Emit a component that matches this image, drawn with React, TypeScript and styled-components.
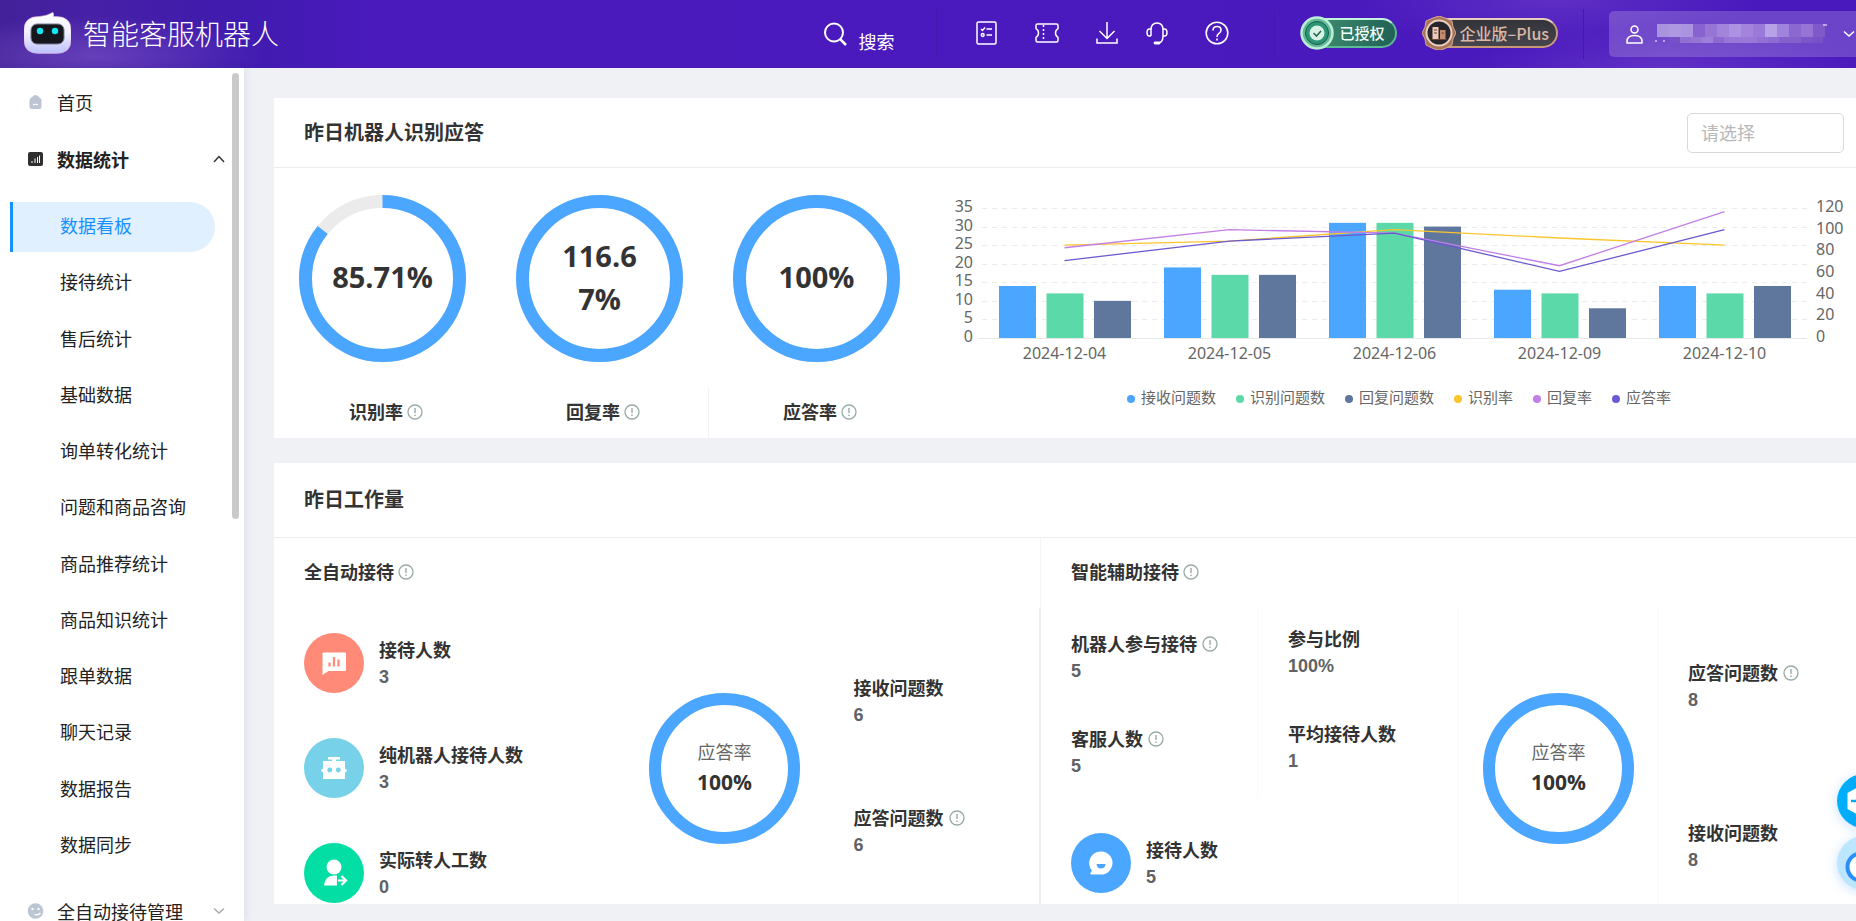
import React from "react";
import styled, { createGlobalStyle } from "styled-components";

const cjk = `"Noto Sans CJK SC", sans-serif`;

const GlobalStyle = createGlobalStyle`
  * { box-sizing: border-box; }
  body { margin: 0; background: #f0f1f5; font-family: ${cjk}; font-size: 18px; line-height: 27px; color: #333; }
  ul { list-style: none; margin: 0; padding: 0; }
  h2, h3, p { margin: 0; font-size: inherit; }
  a { color: inherit; text-decoration: none; }
  button { border: 0; padding: 0; background: none; color: inherit; font: inherit; cursor: pointer; }
  svg { display: block; flex: none; }
`;

const Page = styled.div`
  height: 100vh;
  display: flex;
  flex-direction: column;
  overflow: hidden;
  position: relative;
`;

/* ---------- header ---------- */

const TopBar = styled.header`
  flex: none;
  height: 68px;
  display: flex;
  align-items: center;
  padding-left: 24px;
  color: #fff;
  overflow: hidden;
  background:
    radial-gradient(ellipse 170px 40px at 95px 56px, rgba(150, 110, 215, 0.4), transparent),
    radial-gradient(ellipse 200px 40px at calc(100% - 190px) 68px, rgba(140, 95, 215, 0.35), transparent),
    radial-gradient(ellipse 200px 50px at calc(100% - 300px) 0, rgba(140, 95, 215, 0.3), transparent),
    linear-gradient(90deg, #43219a 0, #4620a6 90px, #401bae 230px, #4a1abd 380px, #4a19bd 100%);
`;

const Brand = styled.a`
  display: flex;
  align-items: center;
  gap: 12px;
  flex: 1 1 auto;
  padding-bottom: 3px;
  font-size: 28px;
  font-weight: 200;
  line-height: 40px;
  white-space: nowrap;
`;

const SearchButton = styled.button`
  display: flex;
  align-items: center;
  gap: 12px;
  height: 50px;
  padding-right: 41px;
  border-right: 1px solid #4518b2;
  span { padding-top: 14px; }
`;

const Tools = styled.nav`
  display: flex;
  align-items: center;
  height: 50px;
  padding: 0 32px 2px 36px;
  border-right: 1px solid #4518b2;
`;

const Tool = styled.button<{ $w: number }>`
  width: ${(p) => p.$w}px;
  display: flex;
  justify-content: center;
`;

const Badges = styled.div`
  display: flex;
  align-items: center;
  gap: 25px;
  height: 50px;
  padding: 0 25px 2px;
  border-right: 1px solid #4518b2;
`;

const Badge = styled.div<{ $gold?: boolean }>`
  position: relative;
  display: flex;
  align-items: center;
  height: 30px;
  margin-left: 6px;
  padding: 0 ${(p) => (p.$gold ? 7 : 10)}px 0 ${(p) => (p.$gold ? 30 : 32)}px;
  border-radius: 15px;
  border: 2px solid ${(p) => (p.$gold ? "#c89778" : "#5cb897")};
  border-top-color: ${(p) => (p.$gold ? "#e9cdbd" : "#c3f3dd")};
  background: ${(p) => (p.$gold ? "linear-gradient(#33333a, #46454d)" : "linear-gradient(100deg, #439272, #1f6055)")};
  color: ${(p) => (p.$gold ? "#d9b8a6" : "#f4fffa")};
  font-size: ${(p) => (p.$gold ? 16 : 15)}px;
  font-weight: 500;
  line-height: 24px;
  white-space: nowrap;
  svg { position: absolute; left: -8px; top: -4px; }
`;

const Account = styled.button`
  display: flex;
  align-items: center;
  margin-left: 25px;
  height: 46px;
  padding: 0 1px 0 17px;
  border-radius: 5px 0 0 5px;
  background: rgba(255, 255, 255, 0.19);
`;

const MaskedNameSlot = styled.span`
  margin: 0 12px;
`;

/* ---------- sidebar ---------- */

const Body = styled.div`
  flex: 1;
  min-height: 0;
  display: flex;
`;

const Sidebar = styled.aside`
  position: relative;
  flex: none;
  width: 244px;
  background: #fff;
  box-shadow: 2px 0 8px rgba(40, 50, 80, 0.08);
  padding-top: 10px;
  overflow: hidden;
  color: #222;
`;

const ScrollThumb = styled.div`
  position: absolute;
  right: 5px;
  top: 5px;
  width: 7px;
  height: 446px;
  border-radius: 4px;
  background: #cacaca;
`;

const MenuRow = styled.a<{ $open?: boolean }>`
  display: flex;
  align-items: center;
  height: 50px;
  margin-bottom: 7px;
  padding: 0 19px 2px 27px;
  line-height: 18px;
  font-weight: ${(p) => (p.$open ? 700 : 400)};
  white-space: nowrap;
  span { flex: 1; margin-left: 13px; }
`;

const SubMenu = styled.ul`
  height: 669px;
  margin: 17px 0 16px;
  display: flex;
  flex-direction: column;
  justify-content: space-between;
`;

const SubItem = styled.a<{ $active?: boolean }>`
  display: flex;
  align-items: center;
  height: 50px;
  margin: 0 29px 0 10px;
  padding: 0 0 3px 47px;
  white-space: nowrap;
  border-left: 3px solid ${(p) => (p.$active ? "#1890ff" : "transparent")};
  border-radius: 0 25px 25px 0;
  background: ${(p) => (p.$active ? "#e1f0fe" : "none")};
  color: ${(p) => (p.$active ? "#1890ff" : "inherit")};
`;

/* ---------- content ---------- */

const Main = styled.main`
  flex: 1;
  min-width: 0;
  padding: 30px 0 0 30px;
  overflow: hidden;
`;

const Card = styled.section`
  background: #fff;
  margin-bottom: 25px;
`;

const CardHead = styled.div<{ $tall?: boolean }>`
  display: flex;
  align-items: center;
  justify-content: space-between;
  height: ${(p) => (p.$tall ? 75 : 70)}px;
  padding: 0 12px 0 30px;
  border-bottom: 1px solid #ebedef;
  h2 { font-size: 20px; font-weight: 700; padding-bottom: 3px; }
`;

const Picker = styled.select`
  appearance: none;
  width: 157px;
  height: 40px;
  padding: 0 13px 2px;
  border: 1px solid #d9d9d9;
  border-radius: 5px;
  background: #fff;
  color: #b8b8b8;
  font: 18px ${cjk};
`;

const RateRow = styled.div`
  display: flex;
  height: 270px;
`;

const Rate = styled.div<{ $divided?: boolean }>`
  flex: none;
  width: 217px;
  display: flex;
  flex-direction: column;
  justify-content: space-between;
  align-items: center;
  padding-top: 27px;
  > p {
    align-self: stretch;
    display: flex;
    justify-content: center;
    height: 50px;
    padding: 10px 0 0 6px;
    border-left: 1px solid ${(p) => (p.$divided ? "#f0f2f4" : "transparent")};
  }
`;

const Label = styled.span<{ $gap?: number }>`
  display: inline-flex;
  align-items: center;
  gap: ${(p) => p.$gap ?? 4}px;
  height: 27px;
  font-weight: 700;
  white-space: nowrap;
`;

const RingBox = styled.div<{ $size: number }>`
  position: relative;
  width: ${(p) => p.$size}px;
  height: ${(p) => p.$size}px;
  flex: none;
`;

const RingText = styled.div<{ $big?: boolean }>`
  position: absolute;
  inset: 0;
  display: flex;
  flex-direction: column;
  align-items: center;
  justify-content: center;
  padding-bottom: 4px;
  text-align: center;
  color: #666;
  gap: 4px;
  strong {
    width: ${(p) => (p.$big ? "102px" : "auto")};
    color: #333;
    font: 700 ${(p) => (p.$big ? "29px/43px" : "21px/27px")} "Open Sans", sans-serif;
    word-break: break-all;
  }
`;

const ChartPane = styled.div`
  flex: 1;
  min-width: 0;
  svg.plot { width: 100%; height: auto; }
`;

const AxisText = styled.text`
  font: 16px "Noto Sans", sans-serif;
  fill: #666;
`;

const Legend = styled.ul`
  display: flex;
  justify-content: center;
  gap: 20px;
  padding: 6px 0 0 17px;
  font-size: 15px;
  line-height: 22px;
  color: #666;
  white-space: nowrap;
`;

const LegendItem = styled.li<{ $color: string }>`
  display: flex;
  align-items: center;
  gap: 6px;
  &::before {
    content: "";
    width: 8px;
    height: 8px;
    margin-top: 3px;
    border-radius: 50%;
    background: ${(p) => p.$color};
  }
`;

const Workload = styled.div`
  display: grid;
  grid-template-columns: 767fr 815fr;
`;

const SubHead = styled.h3<{ $divided?: boolean }>`
  display: flex;
  align-items: center;
  height: 70px;
  padding: 0 0 3px 30px;
  border-right: 1px solid ${(p) => (p.$divided ? "#f3f5f6" : "transparent")};
`;

const AutoBody = styled.div`
  display: grid;
  grid-template-columns: 346fr 205fr 187fr;
  height: 296px;
  padding-left: 29px;
  border-right: 2px solid #eceef0;
`;

const AssistBody = styled.div`
  display: grid;
  grid-template-columns: 417fr 200fr 198fr;
  height: 296px;
`;

const Stack = styled.div<{ $top: number; $gap: number; $left?: number; $divided?: boolean }>`
  display: flex;
  flex-direction: column;
  gap: ${(p) => p.$gap}px;
  padding: ${(p) => p.$top}px 0 0 ${(p) => p.$left ?? 0}px;
  border-left: 1px solid ${(p) => (p.$divided ? "#f8f9fa" : "transparent")};
`;

const AssistCounts = styled.div`
  display: grid;
  grid-template-columns: 216fr 201fr;
  height: 190px;
`;

const StatRow = styled.div`
  display: flex;
  align-items: center;
  gap: 15px;
  height: 60px;
`;

const StatText = styled.div`
  display: flex;
  flex-direction: column;
  gap: 1px;
  b { font: 700 18px/27px "Liberation Sans", sans-serif; color: #606266; }
`;

const AssistTotal = styled.div`
  padding: 35px 0 11px 30px;
`;

const RingCell = styled.div<{ $center?: boolean }>`
  display: flex;
  justify-content: ${(p) => (p.$center ? "center" : "flex-start")};
  padding-top: 85px;
  border-left: 1px solid ${(p) => (p.$center ? "#f8f9fa" : "transparent")};
`;

const Floating = styled.div`
  position: absolute;
  right: -35px;
  bottom: 31px;
  display: flex;
  flex-direction: column;
  gap: 8px;
`;

const FloatButton = styled.button<{ $light?: boolean }>`
  width: 54px;
  height: 54px;
  border-radius: 50%;
  background: ${(p) => (p.$light ? "#bbe6fd" : "linear-gradient(90deg, #00b0fa, #0a9cf5)")};
  box-shadow: 0 2px 12px rgba(40, 140, 255, 0.25);
`;

/* ---------- drawings ---------- */

const Info = () => (
  <svg width="16" height="16" viewBox="0 0 16 16" fill="none" stroke="#98aaa6">
    <circle cx="8" cy="8" r="7" strokeWidth="1.3" />
    <path d="M8 4v5" strokeWidth="1.4" />
    <path d="M8 10.6v1.5" strokeWidth="1.4" />
  </svg>
);

const Chevron = ({ up, color }: { up?: boolean; color: string }) => (
  <svg width="12" height="8" viewBox="0 0 12 8" fill="none" stroke={color} strokeWidth="1.5">
    <path d={up ? "M1 7l5-5.4L11 7" : "M1 1.5l5 4.5 5-4.5"} />
  </svg>
);

const Logo = () => (
  <svg width="47" height="42" viewBox="0 0 47 42">
    <defs>
      <linearGradient id="shell" x1="0" y1="0" x2="0" y2="1">
        <stop offset="0" stopColor="#fff" />
        <stop offset="0.5" stopColor="#f0f0ff" />
        <stop offset="1" stopColor="#bcc0fa" />
      </linearGradient>
    </defs>
    <path d="M15 4.500 Q23 4 28.500 0.500 Q30 0 29.500 4.500 L32 4.500 Q47 4.500 47 18 V28 Q47 41.500 32 41.500 H15 Q0 41.500 0 28 V18 Q0 4.500 15 4.500z" fill="url(#shell)" stroke="#e9b9cf" strokeWidth="0.500" />
    <rect x="7" y="12" width="33" height="20" rx="6" fill="#16171c" stroke="#777a92" />
    <ellipse cx="16" cy="19" rx="3.200" ry="3.300" fill="#0ee9f3" />
    <ellipse cx="31" cy="19" rx="3.200" ry="3.300" fill="#0ee9f3" />
  </svg>
);

const line = { fill: "none", stroke: "#fff", strokeWidth: 1.5 } as const;

const SearchIcon = () => (
  <svg width="23" height="24" viewBox="0 0 23 24" {...line} strokeWidth={2}>
    <circle cx="10" cy="10.500" r="9" />
    <path d="M16 17l6 6" strokeWidth={2.500} />
  </svg>
);
const ChecklistIcon = () => (
  <svg width="21" height="24" viewBox="0 0 21 24" {...line}>
    <rect x="1" y="1" width="19" height="22" rx="1.500" />
    <path d="M5 8l1.500 1.500L9 6.500M10.500 8H16M10.500 14H16" />
    <circle cx="6.700" cy="14" r="1.400" />
  </svg>
);
const TicketIcon = () => (
  <svg width="24" height="20" viewBox="0 0 24 20" {...line}>
    <path d="M2.500 1h19q1.500 0 1.500 1.500v3.200q-2.500 1.300-2.500 4.300t2.500 4.300v3.200q0 1.500-1.500 1.500h-19Q1 19 1 17.500v-3.200q2.500-1.300 2.500-4.300T1 5.700V2.500Q1 1 2.500 1z" strokeLinejoin="round" />
    <path d="M8.500 2v16" strokeDasharray="2 2" />
  </svg>
);
const DownloadIcon = () => (
  <svg width="22" height="22" viewBox="0 0 22 22" {...line}>
    <path d="M11 0v16M3.500 9l7.500 7.500L18.500 9M1 16.500V21h20v-4.500" />
  </svg>
);
const HeadsetIcon = () => (
  <svg width="22" height="23" viewBox="0 0 22 23" {...line}>
    <path d="M5 14V8q0-7 6-7t6 7v6M5 7H3.500Q1 7 1 10.500T3.500 14H5M17 7h1.500Q21 7 21 10.500T18.500 14H17q0 6-4 7" />
    <path d="M9 21h4" strokeWidth={2.800} strokeLinecap="round" />
  </svg>
);
const HelpIcon = () => (
  <svg width="24" height="24" viewBox="0 0 24 24" {...line} strokeWidth={1.600}>
    <circle cx="12" cy="12" r="10.800" />
    <path d="M8 9.500Q8 5.500 12 5.500T16 9q0 2-2 3.300T12 16M12 17.500v2" />
  </svg>
);
const UserIcon = () => (
  <svg width="17" height="19" viewBox="0 0 17 19" {...line}>
    <circle cx="8.500" cy="4.500" r="3.500" />
    <path d="M1 18v-1.500Q1 10.500 8.500 10.500T16 16.500V18z" strokeLinejoin="round" />
  </svg>
);

const SealIcon = () => (
  <svg width="34" height="34" viewBox="0 0 34 34">
    <circle cx="17" cy="17" r="15.500" fill="#67b898" stroke="#b9f0d8" strokeWidth="2.500" />
    <circle cx="17" cy="17" r="11.500" fill="#2c9777" stroke="#175c49" />
    <circle cx="17" cy="17" r="7.500" fill="#d9f2e8" />
    <path d="M13.500 17l3 3 4.500-5" fill="none" stroke="#28684f" strokeWidth="1.600" />
  </svg>
);
const EditionIcon = () => (
  <svg width="34" height="34" viewBox="0 0 34 34">
    <path d="M11 2l6-2 6 2 7 3 1 6 3 6-3 6-1 6-6 3-5 2h-4l-5-2-6-3-1-6-3-6 3-6 1-6z" fill="#a87458" stroke="#d3a88f" />
    <circle cx="17" cy="17" r="12.500" fill="#28262b" stroke="#ead1c3" strokeWidth="2" />
    <path d="M10.500 11h6v12h-6z" fill="#efc9b5" />
    <path d="M18 14h5.500v9H18z" fill="#c28a6e" />
    <path d="M12 14h3M12 17h3M19.500 17h2.500M9.500 23.500h15" stroke="#6c4938" />
  </svg>
);

/* Masked account name: two rows of tinted tiles. */
const tilesTop = ["a993de", "af98e2", "ab94df", "8863cf", "9675d4", "a285da", "ad91e2", "a483dc", "9a7ad8", "b7a2e8", "a083dc", "8a68d0", "9674d6", "8059c9"];
const tilesBottom = ["7850c6", "9070d2", "9475d4", "9d80d9", "8c68d0", "9875d7", "9878d8", "9a78d8", "9370d4", "8d6bd2", "8560cc", "8460cc", "7c56c8", "7a52c7"];
const MaskedName = () => (
  <svg width="176" height="20" viewBox="0 0 176 20">
    {tilesTop.map((c, i) => <rect key={c} x={2 + i * 12} y="0" width="12" height="13" fill={`#${c}`} />)}
    {tilesBottom.map((c, i) => <rect key={i} x={14 + i * 11} y="13" width="11" height="6" fill={`#${c}`} />)}
    <path d="M0 17h2M8 17h2M168 1h4" stroke="#fff" />
  </svg>
);

const HomeIcon = () => (
  <svg width="17" height="16" viewBox="0 0 17 16">
    <path d="M8.500 1q1 0 2 .8l3 2.400q1 .8 1 2V13q0 2-2 2h-8q-2 0-2-2V6.200q0-1.200 1-2l3-2.400q1-.8 2-.8z" fill="#bcc5d2" />
    <path d="M6 10.500h5" stroke="#fff" strokeWidth="1.300" />
  </svg>
);
const StatsIcon = () => (
  <svg width="17" height="16" viewBox="0 0 17 16">
    <rect x="1" y="1" width="15" height="14" rx="2" fill="#303030" />
    <path d="M5 12v-2M8 12V7.500M10.500 12V6M12.500 12V4.500" stroke="#fff" />
  </svg>
);
const FaceIcon = () => (
  <svg width="17" height="16" viewBox="0 0 17 16">
    <circle cx="8.500" cy="8" r="7.800" fill="#bcc5d2" />
    <circle cx="5.500" cy="6" r="1.200" fill="#fff" />
    <circle cx="11.500" cy="6" r="1.200" fill="#fff" />
    <path d="M7.500 11.500q4 1 6-1.500" stroke="#fff" strokeWidth="1.400" fill="none" />
  </svg>
);

const Disc = ({ color, children }: { color: string; children: React.ReactNode }) => (
  <svg width="60" height="60" viewBox="0 0 60 60">
    <circle cx="30" cy="30" r="30" fill={color} />
    {children}
  </svg>
);
const ReportDisc = () => (
  <Disc color="#ff8a78">
    <path d="M19 19.500h22a1 1 0 0 1 1 1V37a1 1 0 0 1-1 1H24.500l-6 4V20z" fill="#fff" />
    <path d="M25.500 33.500v-4M30 33.500v-9.500M34.500 33.500v-7" stroke="#ff8a78" strokeWidth="2.200" />
  </Disc>
);
const RobotDisc = () => (
  <Disc color="#77d2e9">
    <path d="M24 19h12v2.500h-4V23h9v8h1.500v3H41v7H19v-7h-1.500v-3H19v-8h9v-1.500h-4z" fill="#fff" />
    <circle cx="25.700" cy="32" r="2.400" fill="#77d2e9" />
    <circle cx="34.300" cy="32" r="2.400" fill="#77d2e9" />
  </Disc>
);
const TransferDisc = () => (
  <Disc color="#02dea4">
    <circle cx="30" cy="24" r="7.500" fill="#fff" />
    <path d="M20 42.500q.5-9.500 10-10h3v10z" fill="#fff" />
    <path d="M34 37.500h8M37.500 33l4.500 4.500-4.500 4.500" fill="none" stroke="#fff" strokeWidth="2.200" />
  </Disc>
);
const ChatDisc = () => (
  <Disc color="#4aa6ff">
    <path d="M30 18.500a11.500 11.500 0 1 1 0 23H20q-1.500-.5-.5-1.500l1.500-2.500A11.500 11.500 0 0 1 30 18.500z" fill="#fff" />
    <path d="M25.500 31h9q-.5 4.500-4.500 4.500T25.500 31z" fill="#4aa6ff" />
  </Disc>
);

type RingProps = { size: number; width: number; value: number; caption?: string; text: string };
const Ring = ({ size, width, value, caption, text }: RingProps) => {
  const r = (size - width) / 2;
  const round = 2 * Math.PI * r;
  return (
    <RingBox $size={size}>
      <svg width={size} height={size} fill="none" strokeWidth={width}>
        <circle cx={size / 2} cy={size / 2} r={r} stroke="#ebebeb" />
        <circle
          cx={size / 2}
          cy={size / 2}
          r={r}
          stroke="#4aa6ff"
          strokeDasharray={`${(Math.min(value, 100) / 100) * round} ${round}`}
          transform={`rotate(-90 ${size / 2} ${size / 2})`}
        />
      </svg>
      <RingText $big={!caption}>
        {caption && <span>{caption}</span>}
        <strong>{text}</strong>
      </RingText>
    </RingBox>
  );
};

/* ---------- chart ---------- */

const days = ["2024-12-04", "2024-12-05", "2024-12-06", "2024-12-09", "2024-12-10"];
const bars = [
  { name: "接收问题数", color: "#4aa6ff", data: [14, 19, 31, 13, 14] },
  { name: "识别问题数", color: "#5cd9a8", data: [12, 17, 31, 12, 12] },
  { name: "回复问题数", color: "#5f779d", data: [10, 17, 30, 8, 14] },
];
const rates = [
  { name: "识别率", color: "#fbc52d", data: [85.7, 89.5, 100, 92.3, 85.7] },
  { name: "回复率", color: "#c27fe6", data: [83.3, 100, 96.8, 66.7, 116.7] },
  { name: "应答率", color: "#6b59d0", data: [71.4, 89.5, 96.8, 61.5, 100] },
];
const plot = { left: 57, right: 882, top: 40, bottom: 170, step: 165 };
const yOf = (v: number, max: number) => plot.bottom - (v / max) * (plot.bottom - plot.top);

const Chart = () => (
  <ChartPane>
    <svg className="plot" viewBox="0 0 931 212">
      {[5, 10, 15, 20, 25, 30, 35].map((v) => (
        <line key={v} x1={plot.left} x2={plot.right} y1={Math.round(yOf(v, 35)) + 0.5} y2={Math.round(yOf(v, 35)) + 0.5} stroke="#ececec" strokeDasharray="5 5" />
      ))}
      <line x1={plot.left - 4} x2={plot.right} y1={plot.bottom + 0.5} y2={plot.bottom + 0.5} stroke="#e8e8e8" />
      {[0, 5, 10, 15, 20, 25, 30, 35].map((v) => (
        <AxisText key={v} x={48} y={yOf(v, 35) + 4} textAnchor="end">{v}</AxisText>
      ))}
      {[0, 20, 40, 60, 80, 100, 120].map((v) => (
        <AxisText key={v} x={891} y={yOf(v, 120) + 4} textAnchor="start">{v}</AxisText>
      ))}
      {bars.map((s, k) =>
        s.data.map((v, i) => (
          <rect key={`${k}-${i}`} x={plot.left + i * plot.step + 17 + k * 47.5} y={yOf(v, 35)} width="37" height={plot.bottom - yOf(v, 35)} fill={s.color} />
        ))
      )}
      {rates.map((s) => (
        <polyline key={s.name} points={s.data.map((v, i) => `${plot.left + (i + 0.5) * plot.step},${yOf(v, 120)}`).join(" ")} fill="none" stroke={s.color} strokeWidth="1.300" />
      ))}
      {days.map((d, i) => (
        <AxisText key={d} x={plot.left + (i + 0.5) * plot.step} y={191} textAnchor="middle">{d}</AxisText>
      ))}
    </svg>
    <Legend>
      {[...bars, ...rates].map((s) => <LegendItem key={s.name} $color={s.color}>{s.name}</LegendItem>)}
    </Legend>
  </ChartPane>
);

type StatProps = { label: string; value: string; info?: boolean; icon?: React.ReactNode };
const Stat = ({ label, value, info, icon }: StatProps) => {
  const text = (
    <StatText>
      <Label $gap={5}>{label}{info && <Info />}</Label>
      <b>{value}</b>
    </StatText>
  );
  return icon ? <StatRow>{icon}{text}</StatRow> : text;
};

const subMenu = ["数据看板", "接待统计", "售后统计", "基础数据", "询单转化统计", "问题和商品咨询", "商品推荐统计", "商品知识统计", "跟单数据", "聊天记录", "数据报告", "数据同步"];

export default function App() {
  return (
    <Page>
      <GlobalStyle />
      <TopBar>
        <Brand href="#"><Logo />智能客服机器人</Brand>
        <SearchButton><SearchIcon /><span>搜索</span></SearchButton>
        <Tools>
          <Tool $w={28} aria-label="任务"><ChecklistIcon /></Tool>
          <Tool $w={92} aria-label="卡券"><TicketIcon /></Tool>
          <Tool $w={28} aria-label="下载"><DownloadIcon /></Tool>
          <Tool $w={72} aria-label="客服"><HeadsetIcon /></Tool>
          <Tool $w={49} aria-label="帮助"><HelpIcon /></Tool>
        </Tools>
        <Badges>
          <Badge><SealIcon />已授权</Badge>
          <Badge $gold><EditionIcon />企业版–Plus</Badge>
        </Badges>
        <Account aria-label="账号">
          <UserIcon />
          <MaskedNameSlot><MaskedName /></MaskedNameSlot>
          <Chevron color="#fff" />
        </Account>
      </TopBar>
      <Body>
        <Sidebar>
          <MenuRow href="#"><HomeIcon /><span>首页</span></MenuRow>
          <MenuRow href="#" $open><StatsIcon /><span>数据统计</span><Chevron up color="#333" /></MenuRow>
          <SubMenu>
            {subMenu.map((t, i) => <li key={t}><SubItem href="#" $active={i === 0}>{t}</SubItem></li>)}
          </SubMenu>
          <MenuRow href="#"><FaceIcon /><span>全自动接待管理</span><Chevron color="#aaa" /></MenuRow>
          <ScrollThumb />
        </Sidebar>
        <Main>
          <Card>
            <CardHead>
              <h2>昨日机器人识别应答</h2>
              <Picker aria-label="请选择" defaultValue=""><option value="">请选择</option></Picker>
            </CardHead>
            <RateRow>
              <Rate><Ring size={167} width={13} value={85.71} text="85.71%" /><p><Label>识别率<Info /></Label></p></Rate>
              <Rate><Ring size={167} width={13} value={116.67} text="116.67%" /><p><Label>回复率<Info /></Label></p></Rate>
              <Rate $divided><Ring size={167} width={13} value={100} text="100%" /><p><Label>应答率<Info /></Label></p></Rate>
              <Chart />
            </RateRow>
          </Card>
          <Card>
            <CardHead $tall><h2>昨日工作量</h2></CardHead>
            <Workload>
              <div>
                <SubHead $divided><Label>全自动接待<Info /></Label></SubHead>
                <AutoBody>
                  <Stack $top={25} $gap={45}>
                    <Stat icon={<ReportDisc />} label="接待人数" value="3" />
                    <Stat icon={<RobotDisc />} label="纯机器人接待人数" value="3" />
                    <Stat icon={<TransferDisc />} label="实际转人工数" value="0" />
                  </Stack>
                  <RingCell><Ring size={151} width={12} value={100} caption="应答率" text="100%" /></RingCell>
                  <Stack $top={66} $gap={75}>
                    <Stat label="接收问题数" value="6" />
                    <Stat label="应答问题数" value="6" info />
                  </Stack>
                </AutoBody>
              </div>
              <div>
                <SubHead><Label>智能辅助接待<Info /></Label></SubHead>
                <AssistBody>
                  <div>
                    <AssistCounts>
                      <Stack $top={22} $gap={40} $left={29}>
                        <Stat label="机器人参与接待" value="5" info />
                        <Stat label="客服人数" value="5" info />
                      </Stack>
                      <Stack $top={17} $gap={40} $left={30} $divided>
                        <Stat label="参与比例" value="100%" />
                        <Stat label="平均接待人数" value="1" />
                      </Stack>
                    </AssistCounts>
                    <AssistTotal><Stat icon={<ChatDisc />} label="接待人数" value="5" /></AssistTotal>
                  </div>
                  <RingCell $center><Ring size={151} width={12} value={100} caption="应答率" text="100%" /></RingCell>
                  <Stack $top={51} $gap={105} $left={29} $divided>
                    <Stat label="应答问题数" value="8" info />
                    <Stat label="接收问题数" value="8" />
                  </Stack>
                </AssistBody>
              </div>
            </Workload>
          </Card>
        </Main>
      </Body>
      <Floating>
        <FloatButton aria-label="助手">
          <svg width="54" height="54" viewBox="0 0 54 54">
            <path d="M27 10l16.500 9v16L27 44l-16.500-9V19z" fill="#fff" />
            <path d="M14 27h9" stroke="#00a8f8" strokeWidth="2.500" />
          </svg>
        </FloatButton>
        <FloatButton $light aria-label="咨询">
          <svg width="54" height="54" viewBox="0 0 54 54">
            <circle cx="24" cy="31" r="13.500" fill="#fff" stroke="#2a8ff8" strokeWidth="4" />
          </svg>
        </FloatButton>
      </Floating>
    </Page>
  );
}
